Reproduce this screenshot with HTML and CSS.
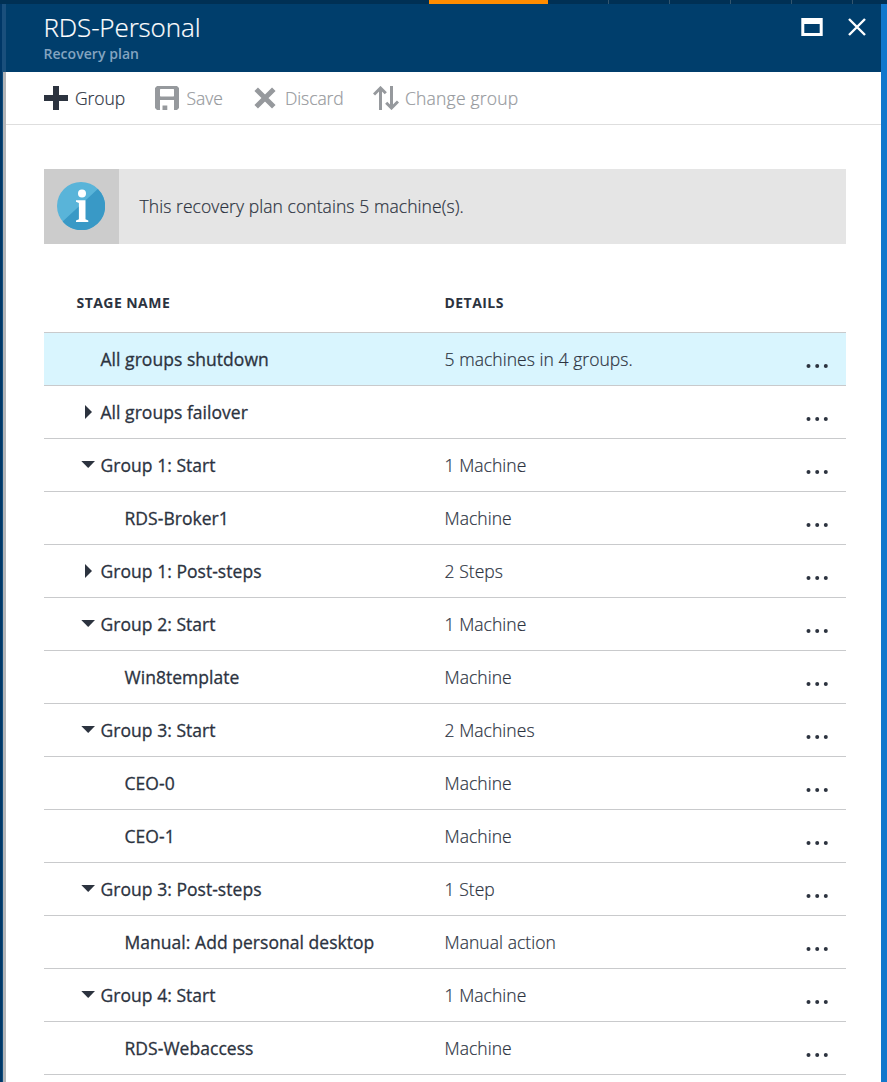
FILE: index.html
```
<!DOCTYPE html>
<html lang="en">
<head>
<meta charset="utf-8">
<title>RDS-Personal - Recovery plan</title>
<link rel="stylesheet" href="styles.css">
</head>
<body>
<div class="topbar"><span class="loading"></span><div class="ticks"><i></i><i></i><i></i><i></i><i></i></div></div>
<div class="workspace">
  <div class="rail"><div class="rail-top"></div></div>
  <main class="blade">
    <header class="blade-header">
      <div>
        <h1 class="title">RDS-Personal</h1>
        <p class="subtitle">Recovery plan</p>
      </div>
      <div class="window-actions">
        <svg class="maximize" width="22" height="18" viewBox="0 0 22 18"><path fill="#fff" fill-rule="evenodd" d="M.3 0h21.4v18H.3zM3.3 6v9h15.4V6z"/></svg>
        <svg class="close" width="18" height="18" viewBox="0 0 18 18"><path d="M1 1l16 16M17 1L1 17" stroke="#fff" stroke-width="2.4"/></svg>
      </div>
    </header>
    <nav class="toolbar">
      <button class="command group"><svg width="24" height="24" viewBox="0 0 24 24"><path fill="#2c333f" d="M9 0h6v9h9v6h-9v9H9v-9H0V9h9z"/></svg><span>Group</span></button>
      <button class="command save disabled"><svg width="24" height="24" viewBox="0 0 24 24"><path fill="#96999d" d="M2 0h20l2 2v20l-2 2H2l-2-2V2z"/><path fill="#fff" d="M5.500 3h13l.5.5V10l-.5.5h-13L5 10V3.500zM5 14h14v10H5z"/><path fill="#96999d" d="M7.500 19.500h4.800V24H7.500z"/></svg><span>Save</span></button>
      <button class="command discard disabled"><svg width="22" height="22" viewBox="0 0 22 22"><path d="M2.200 2.200l17.600 17.600M19.800 2.200L2.200 19.800" stroke="#96999d" stroke-width="5"/></svg><span>Discard</span></button>
      <button class="command change disabled"><svg width="26" height="24" viewBox="0 0 26 24"><path d="M7.500 24V2M1 8.500l6.500-6.500 5.300 5.300M18.500 0v22M25 15.500L18.500 22l-5.300-5.300" fill="none" stroke="#96999d" stroke-width="3"/></svg><span>Change group</span></button>
    </nav>
    <section class="content">
      <div class="info">
        <div class="info-icon"><svg width="48" height="48" viewBox="0 0 48 48"><circle cx="24" cy="24" r="24" fill="#59b4d9"/><path d="M40.800 6.900A24 24 0 1 1 5.600 39.400z" fill="#3999c6"/><circle cx="25" cy="11.500" r="4" fill="#fff"/><path fill="#fff" d="M19 18.300h9.500v18.900l2.800 1.200V40H19v-1.600l2.900-1.200V21L19 19.800z"/></svg></div>
        <p class="info-text"><span>This recovery plan contains 5 machine(s).</span></p>
      </div>
      <div class="grid-head"><span class="head-name">STAGE NAME</span><span>DETAILS</span></div>
      <div class="grid" id="grid"></div>
    </section>
  </main>
  <div class="edge"></div>
</div>
<script src="rows.js"></script>
</body>
</html>
```
FILE: styles.css
```
* { box-sizing: border-box; }
body {
  margin: 0;
  height: 1082px;
  overflow: hidden;
  font-family: "Open Sans", "Noto Sans", sans-serif;
  color: #2c333f;
  background: #003e6c;
}
.topbar { height: 4px; display: flex; background: #003054; padding-left: 429px; }
.loading { width: 119px; background: #ff8c00; }
.ticks { display: flex; gap: 60px; padding-left: 60px; }
.ticks i { width: 1px; background: #33566f; }
.workspace { display: flex; height: 1078px; }
.rail { width: 6px; border-left: 2px solid #003767; background: linear-gradient(90deg, #0f4c7c 1px, #b2b4b7 1px); }
.rail-top { height: 68px; background: #1a4f7c; }
.blade { width: 875px; background: #fff; }
.edge { width: 6px; background: #1177cc; }
.blade-header {
  height: 68px;
  display: flex;
  justify-content: space-between;
  padding: 6px 15px 0 37.500px;
  background: #003e6c;
}
.title { margin: 0; font-size: 26px; line-height: 34px; font-weight: 300; letter-spacing: -.12px; color: #fff; -webkit-text-stroke: .2px; }
.subtitle { margin: 0; font-size: 14px; line-height: 19px; font-weight: 600; letter-spacing: .05px; color: #84a4c0; }
.window-actions { display: flex; gap: 25px; padding-top: 8px; }
.toolbar { height: 53px; display: flex; border-bottom: 1px solid #dedede; padding-left: 38px; }
.command {
  display: flex;
  align-items: center;
  gap: 7px;
  border: 0;
  padding: 0;
  background: none;
  font: 300 17.500px/24px "Open Sans", "Noto Sans", sans-serif;
  color: #2c333f;
  white-space: nowrap;
  -webkit-text-stroke: .2px;
}
.command.group { width: 111px; letter-spacing: -.1px; }
.command.save { width: 99px; gap: 7.500px; }
.command.discard { width: 119px; gap: 9px; letter-spacing: -.1px; }
.command.change { gap: 6px; letter-spacing: .2px; }
.disabled { color: #96999d; }
.content { padding: 44px 35px 0 38px; }
.info { height: 75px; display: flex; background: #e5e5e5; }
.info-icon { width: 75px; padding: 13px; background: #ccc; }
.info-icon svg { display: block; }
.info-text { margin: 0; padding: 0 0 0 20.500px; font-size: 17.500px; line-height: 75px; font-weight: 300; letter-spacing: .07px; -webkit-text-stroke: .2px; }
.grid-head { height: 88px; display: flex; padding: 30px 0 0 32.500px; font-size: 14px; line-height: 57px; font-weight: 700; letter-spacing: .45px; }
.head-name { width: 368px; }
.grid { border-top: 1px solid #c9cacc; }
.row { height: 53px; display: flex; align-items: center; border-bottom: 1px solid #c9cacc; padding: 0 16px 0 37px; }
.selected { background: #d9f5fe; }
.arrow { width: 19.500px; display: flex; }
.name { width: 344px; font-size: 17.500px; font-weight: 500; letter-spacing: .04px; -webkit-text-stroke: .3px; }
.child .name { padding-left: 24px; }
.details { flex: 1; font-size: 17.500px; font-weight: 300; letter-spacing: .05px; -webkit-text-stroke: .2px; }
.more { display: flex; margin-top: 14px; }
```
FILE: rows.js
```
const rows = [
  ["", "All groups shutdown", "5 machines in 4 groups.", "selected"],
  ["closed", "All groups failover", ""],
  ["open", "Group 1: Start", "1 Machine"],
  ["", "RDS-Broker1", "Machine", "child"],
  ["closed", "Group 1: Post-steps", "2 Steps"],
  ["open", "Group 2: Start", "1 Machine"],
  ["", "Win8template", "Machine", "child"],
  ["open", "Group 3: Start", "2 Machines"],
  ["", "CEO-0", "Machine", "child"],
  ["", "CEO-1", "Machine", "child"],
  ["open", "Group 3: Post-steps", "1 Step"],
  ["", "Manual: Add personal desktop", "Manual action", "child"],
  ["open", "Group 4: Start", "1 Machine"],
  ["", "RDS-Webaccess", "Machine", "child"]
];
const arrows = { open: "M.3 3H14L7.200 10z", closed: "M4 0v14l7-7z" };
document.getElementById("grid").innerHTML = rows.map(([state, name, details, kind = ""]) => `
  <div class="row ${kind}">
    <span class="arrow">${state ? `<svg width="14" height="14" viewBox="0 0 14 14"><path fill="#2c333f" d="${arrows[state]}"/></svg>` : ""}</span>
    <span class="name"><span>${name}</span></span>
    <span class="details"><span>${details}</span></span>
    <svg class="more" width="24" height="4" viewBox="0 0 24 4"><g fill="#2c333f"><circle cx="2.500" cy="2" r="2"/><circle cx="11.200" cy="2" r="2"/><circle cx="19.800" cy="2" r="2"/></g></svg>
  </div>`).join("");
```
